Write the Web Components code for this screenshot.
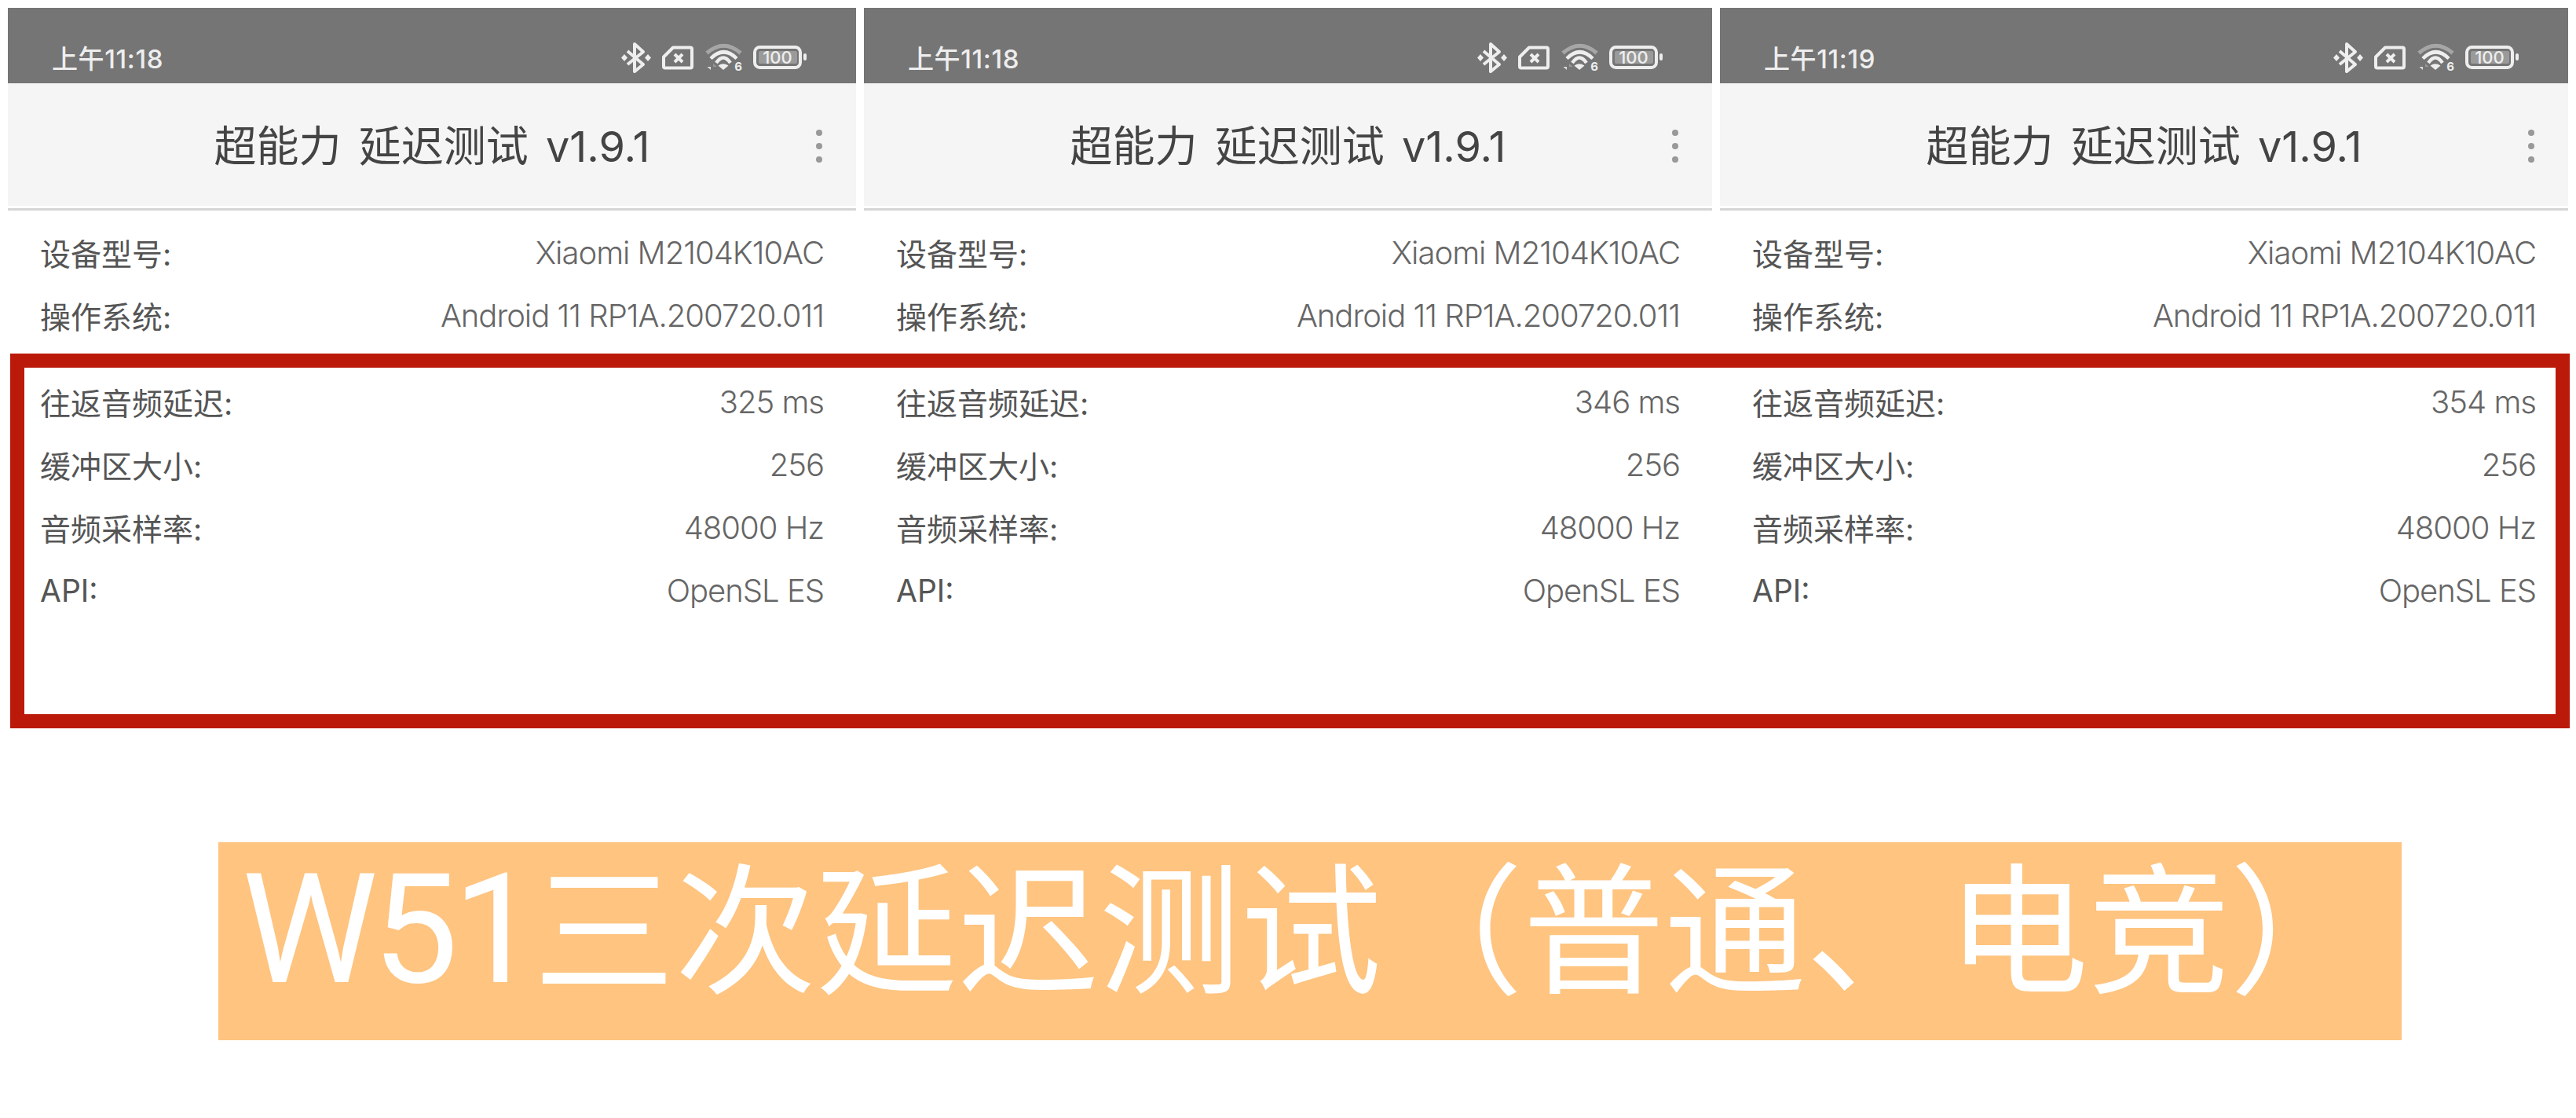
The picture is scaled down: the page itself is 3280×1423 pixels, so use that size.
<!DOCTYPE html>
<html>
<head>
<meta charset="utf-8">
<title>W51</title>
<style>
html, body { margin: 0; background: #fff; }
</style>
</head>
<body>
<latency-board>
  <app-screen slot="screens" time="上午11:18" rtt="325 ms"></app-screen>
  <app-screen slot="screens" time="上午11:18" rtt="346 ms"></app-screen>
  <app-screen slot="screens" time="上午11:19" rtt="354 ms"></app-screen>
  <caption-banner slot="caption"><span>W51</span>三次延迟测试（普通、电竞）</caption-banner>
</latency-board>

<script>
const CJK = '"Noto Sans CJK SC", sans-serif';
const UI = 'Inter, "Noto Sans CJK SC", sans-serif';

class StatusIcons extends HTMLElement {
  constructor() {
    super();
    this.attachShadow({ mode: "open" });
    this.shadowRoot.innerHTML = `
<style>
:host{ display: flex; align-items: center; gap: 15px; color: #eee; }
svg{ display: block; flex: none; overflow: visible; }
text{ font-family: Inter, sans-serif; fill: #eee; }
#sim{ margin-right: 1px; }
</style>
<svg width="36" height="39" viewBox="0 0 36 39" fill="none" stroke="#eee" stroke-width="4" stroke-linejoin="round">
  <path d="M7 11 L27 28 L16 37 V2 L27 12 L7 28"/>
  <path d="M3 15 L7 19.5 L3 24 L-1 19.5 Z M33 15 L37 19.5 L33 24 L29 19.5 Z" fill="#eee" stroke="none"/>
</svg>
<svg id="sim" width="40" height="31" viewBox="0 0 40 31" fill="none" stroke="#eee" stroke-width="4">
  <path d="M14 2.5 H36 a2 2 0 0 1 2 2 V26.5 a2 2 0 0 1 -2 2 H4 a2 2 0 0 1 -2 -2 V14.5 Z" stroke-linejoin="round"/>
  <path d="M16 11 L26 21 M26 11 L16 21"/>
</svg>
<svg width="45" height="34" viewBox="0 0 45 34" fill="none">
  <path d="M1 11.5 Q22.5 -7 44 11.5" stroke="#a6a6a6" stroke-width="5"/>
  <path d="M6 18.5 Q22.5 2 39 18.5" stroke="#eee" stroke-width="4.5"/>
  <path d="M13 24 Q22 11 31 24" stroke="#eee" stroke-width="4.5"/>
  <path d="M22 33 L15.5 27.5 Q22 23 28.5 27.5 Z" fill="#eee"/>
  <path d="M6 25 V33 L1.5 29 H6 Z" fill="#ddd"/>
  <path d="M9 33 V25 L13.5 29 H9 Z" fill="#999"/>
  <text x="41" y="33.5" font-size="15" font-weight="700" text-anchor="middle">6</text>
</svg>
<svg width="68" height="30" viewBox="0 0 68 30" fill="none">
  <rect x="2" y="2" width="58" height="26" rx="6.5" stroke="#eee" stroke-width="4"/>
  <rect x="7" y="7" width="49" height="16" rx="2" fill="#9a9a9a"/>
  <rect x="64" y="10" width="4" height="9" rx="2" fill="#eee"/>
  <text x="31" y="23" font-size="22" font-weight="500" text-anchor="middle">100</text>
</svg>
`;
  }
}

class InfoRow extends HTMLElement {
  constructor() {
    super();
    this.attachShadow({ mode: "open" });
    this.shadowRoot.innerHTML = `
<style>
:host{ display: flex; justify-content: space-between; align-items: center; height: 80px; color: #555; white-space: nowrap; }
#label{ font: 400 39px ${UI}; }
#value{ font: 300 40px Inter, sans-serif; letter-spacing: -1px; color: #666; }
</style>
<span id="label"></span><span id="value"></span>
`;
    this.shadowRoot.querySelector("#label").innerText = this.getAttribute("label");
    this.shadowRoot.querySelector("#value").innerText = this.getAttribute("value");
  }
}

class AppScreen extends HTMLElement {
  constructor() {
    super();
    this.attachShadow({ mode: "open" });
    const rtt = this.getAttribute("rtt");
    this.shadowRoot.innerHTML = `
<style>
:host{ display: block; }
.status{ display: flex; justify-content: space-between; align-items: center; box-sizing: border-box; height: 96px; padding: 30px 63px 0 56px; background: #757575; }
.time{ font: 500 33px ${UI}; color: #eee; letter-spacing: .6px; }
.bar{ display: flex; align-items: center; justify-content: center; position: relative; box-sizing: border-box; height: 156px; padding-bottom: 3px; background: #f5f5f5; }
.title{ font: 400 54px ${UI}; color: #444; white-space: nowrap; word-spacing: 7px; }
.more{ position: absolute; right: 43px; top: 50%; margin-top: -19px; display: flex; flex-direction: column; gap: 9px; }
.more i{ display: block; width: 8px; height: 8px; border-radius: 50%; background: #999; }
.rule{ height: 3px; margin-top: 3px; background: #d5d5d5; }
.rows{ padding: 13px 41px 0; }
.measured{ padding: 30px 41px 0; }
</style>
<div class="status"><span class="time"></span><status-icons></status-icons></div>
<div class="bar"><span class="title">超能力 延迟测试 v1.9.1</span><div class="more"><i></i><i></i><i></i></div></div>
<div class="rule"></div>
<div class="rows">
  <info-row label="设备型号:" value="Xiaomi M2104K10AC"></info-row>
  <info-row label="操作系统:" value="Android 11 RP1A.200720.011"></info-row>
</div>
<div class="measured">
  <info-row label="往返音频延迟:" value="${rtt}"></info-row>
  <info-row label="缓冲区大小:" value="256"></info-row>
  <info-row label="音频采样率:" value="48000 Hz"></info-row>
  <info-row label="API:" value="OpenSL ES"></info-row>
</div>
`;
    this.shadowRoot.querySelector(".time").innerText = this.getAttribute("time");
  }
}

class CaptionBanner extends HTMLElement {
  constructor() {
    super();
    this.attachShadow({ mode: "open" });
    this.shadowRoot.innerHTML = `
<style>
:host{ display: block; box-sizing: border-box; width: 2780px; height: 252px; margin-left: 268px; padding-left: 30px; background: #fec480; color: #fff; font: 400 180px/200px ${CJK}; white-space: nowrap; }
::slotted(span){ font: 400 195px/200px Roboto, sans-serif; letter-spacing: -7px; }
</style>
<slot></slot>
`;
  }
}

class LatencyBoard extends HTMLElement {
  constructor() {
    super();
    this.attachShadow({ mode: "open" });
    this.shadowRoot.innerHTML = `
<style>
:host{ display: block; position: relative; box-sizing: border-box; width: 3280px; height: 1423px; padding: 10px; }
.screens{ display: grid; grid-template-columns: repeat(3, 1080px); gap: 10px; height: 1062px; }
.mark{ position: absolute; left: 13px; top: 450px; width: 3259px; height: 477px; box-sizing: border-box; border: 18px solid #bb1a0a; }
</style>
<div class="screens"><slot name="screens"></slot></div>
<slot name="caption"></slot>
<div class="mark"></div>
`;
  }
}

customElements.define("status-icons", StatusIcons);
customElements.define("info-row", InfoRow);
customElements.define("app-screen", AppScreen);
customElements.define("caption-banner", CaptionBanner);
customElements.define("latency-board", LatencyBoard);
</script>
</body>
</html>
